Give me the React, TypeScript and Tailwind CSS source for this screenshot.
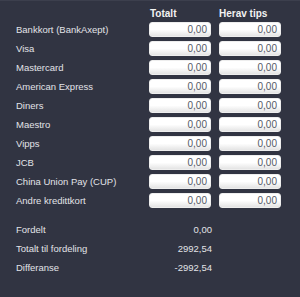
const rows = [
  "Bankkort (BankAxept)",
  "Visa",
  "Mastercard",
  "American Express",
  "Diners",
  "Maestro",
  "Vipps",
  "JCB",
  "China Union Pay (CUP)",
  "Andre kredittkort",
];

const totals = [
  ["Fordelt", "0,00"],
  ["Totalt til fordeling", "2992,54"],
  ["Differanse", "-2992,54"],
];

function Field() {
  return (
    <div className="h-[15px] w-[62px] rounded-[3px] border border-[#eeeeee] bg-gradient-to-b from-white via-white to-[#e4e4e4] pr-[3px] text-right text-[10px] leading-[13px] text-[#555a66]">
      0,00
    </div>
  );
}

export default function App() {
  return (
    <div
      className="h-[297px] w-[300px] border-t border-[#3c3f4d] bg-[#313442] text-[#e2e3e8]"
      style={{ fontFamily: "'Liberation Sans', Arial, sans-serif" }}
    >
      <div className="flex h-[20px] items-end pl-[150px] text-[10px] font-bold leading-[14px] text-[#f2f2f2]">
        <div className="w-[69px]">Totalt</div>
        <div>Herav tips</div>
      </div>
      <div className="mt-[1px] flex flex-col gap-[4px]">
        {rows.map((r) => (
          <div key={r} className="flex items-center">
            <div className="w-[149px] pl-[16px] text-[9.5px] leading-[15px]">{r}</div>
            <Field />
            <div className="w-[8px]" />
            <Field />
          </div>
        ))}
      </div>
      <div className="mt-[14px] flex flex-col gap-[4px]">
        {totals.map(([l, v]) => (
          <div key={l} className="flex text-[9.5px] leading-[15px]">
            <div className="w-[149px] pl-[16px]">{l}</div>
            <div className="w-[63px] text-right">{v}</div>
          </div>
        ))}
      </div>
    </div>
  );
}
